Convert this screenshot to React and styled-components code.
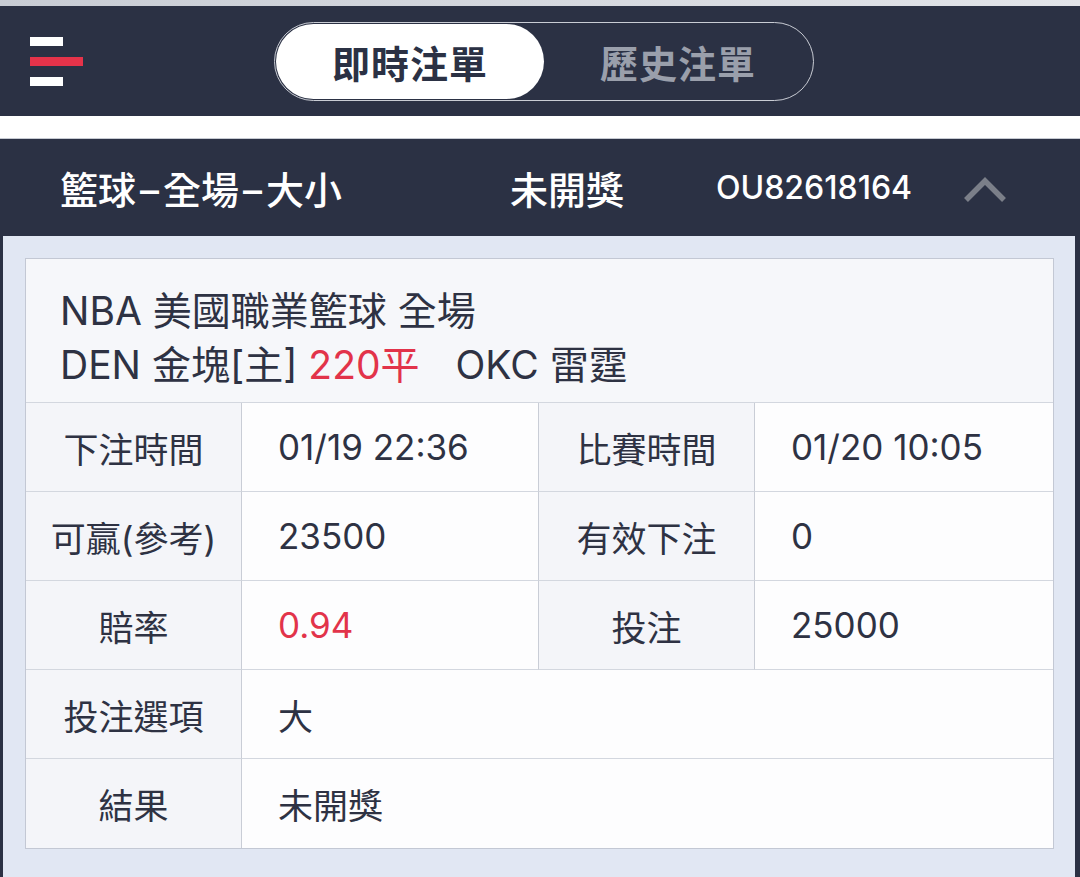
import React from 'react';
import styled, { createGlobalStyle } from 'styled-components';

const GlobalStyle = createGlobalStyle`
  html, body {
    margin: 0;
    padding: 0;
    background: #ffffff;
  }
  body {
    width: 1080px;
    height: 877px;
    overflow: hidden;
    font-family: Inter, "Noto Sans CJK TC", sans-serif;
    color: #2e3243;
  }
`;

const TopStrip = styled.div`
  height: 6px;
  background: linear-gradient(90deg, #c8ccd4, #e2e4e9);
`;

const NavBar = styled.header`
  height: 110px;
  background: #2b3144;
  display: flex;
  align-items: center;
  padding-left: 30px;
`;

const Burger = styled.div`
  display: flex;
  flex-direction: column;
  gap: 11px;
  width: 53px;
`;

const BurgerBar = styled.span`
  display: block;
  height: 9px;
  width: ${p => (p.wide ? '53px' : '33px')};
  background: ${p => (p.wide ? '#e6334a' : '#ffffff')};
`;

const TabSwitch = styled.div`
  margin-left: 191px;
  width: 540px;
  height: 79px;
  box-sizing: border-box;
  border: 1.5px solid #c9ccd4;
  border-radius: 40px;
  display: flex;
  padding: 1px;
`;

const Tab = styled.div`
  flex: ${p => (p.active ? '0 0 268px' : '1')};
  display: flex;
  align-items: center;
  justify-content: center;
  border-radius: 38px;
  font-size: 38px;
  font-weight: 700;
  background: ${p => (p.active ? '#ffffff' : 'transparent')};
  color: ${p => (p.active ? '#2b3144' : '#9a9fab')};
  letter-spacing: 1px;
`;

const Gap = styled.div`
  height: 22px;
  border-bottom: 1px solid #c6cad2;
`;

const Card = styled.section`
  border-left: 3px solid #2b3144;
  border-right: 5px solid #2b3144;
  background: #e1e7f3;
  height: 740px;
`;

const CardHeader = styled.div`
  height: 97px;
  background: #2b3144;
  display: flex;
  align-items: center;
  color: #ffffff;
`;

const HeaderTitle = styled.div`
  font-size: 38px;
  font-weight: 500;
  margin-left: 57px;
  width: 450px;
`;

const Dash = styled.span`
  margin: 0 4px;
`;

const HeaderStatus = styled.div`
  font-size: 38px;
  font-weight: 500;
  width: 206px;
`;

const HeaderId = styled.div`
  font-size: 32px;
  font-weight: 500;
  width: 247px;
`;

const Chevron = styled.svg`
  width: 44px;
  height: 28px;
  margin-top: 4px;
`;

const CardBody = styled.div`
  padding: 22px 21px 0 22px;
`;

const InfoBox = styled.div`
  border: 1px solid #c3c8d4;
  background: #ffffff;
`;

const MatchInfo = styled.div`
  height: 144px;
  box-sizing: border-box;
  padding: 25px 34px 0;
  background: #f6f7fa;
  font-size: 39px;
  line-height: 54px;
  border-bottom: 1px solid #d3d7df;
`;

const Red = styled.span`
  color: #e2334a;
  margin-right: 36px;
`;

const Table = styled.div`
  display: grid;
  grid-template-columns: 216px 297px 216px 1fr;
  grid-auto-rows: 89px;
`;

const Cell = styled.div`
  display: flex;
  align-items: center;
  justify-content: ${p => (p.label ? 'center' : 'flex-start')};
  padding-left: ${p => (p.label ? '0' : '36px')};
  background: ${p => (p.label ? '#f4f5f9' : '#fdfdfe')};
  border-right: ${p => (p.last ? 'none' : '1px solid #c9cdd6')};
  border-bottom: ${p => (p.bottom ? 'none' : '1px solid #d3d7df')};
  grid-column: ${p => (p.span ? 'span 3' : 'auto')};
  font-size: 35px;
  color: ${p => (p.red ? '#e2334a' : '#2e3243')};
`;

const rows = [
  [
    { label: '下注時間', value: '01/19 22:36' },
    { label: '比賽時間', value: '01/20 10:05' },
  ],
  [
    { label: '可贏(參考)', value: '23500' },
    { label: '有效下注', value: '0' },
  ],
  [
    { label: '賠率', value: '0.94', red: true },
    { label: '投注', value: '25000' },
  ],
  [{ label: '投注選項', value: '大' }],
  [{ label: '結果', value: '未開獎' }],
];

export default function App() {
  return (
    <>
      <GlobalStyle />
      <TopStrip />
      <NavBar>
        <Burger>
          <BurgerBar />
          <BurgerBar wide />
          <BurgerBar />
        </Burger>
        <TabSwitch>
          <Tab active>即時注單</Tab>
          <Tab>歷史注單</Tab>
        </TabSwitch>
      </NavBar>
      <Gap />
      <Card>
        <CardHeader>
          <HeaderTitle>
            籃球<Dash>–</Dash>全場<Dash>–</Dash>大小
          </HeaderTitle>
          <HeaderStatus>未開獎</HeaderStatus>
          <HeaderId>OU82618164</HeaderId>
          <Chevron viewBox="0 0 44 28">
            <polyline
              points="3,24 22,5 41,24"
              fill="none"
              stroke="#7b7f89"
              strokeWidth="5.5"
            />
          </Chevron>
        </CardHeader>
        <CardBody>
          <InfoBox>
            <MatchInfo>
              <div>NBA 美國職業籃球 全場</div>
              <div>
                DEN 金塊[主] <Red>220平</Red>OKC 雷霆
              </div>
            </MatchInfo>
            <Table>
              {rows.map((row, ri) =>
                row.flatMap((item, ci) => {
                  const bottom = ri === rows.length - 1;
                  const last = ci === row.length - 1;
                  return [
                    <Cell key={`${ri}-${ci}-l`} label bottom={bottom}>
                      {item.label}
                    </Cell>,
                    <Cell
                      key={`${ri}-${ci}-v`}
                      bottom={bottom}
                      last={last}
                      span={row.length === 1}
                      red={item.red}
                    >
                      {item.value}
                    </Cell>,
                  ];
                })
              )}
            </Table>
          </InfoBox>
        </CardBody>
      </Card>
    </>
  );
}
